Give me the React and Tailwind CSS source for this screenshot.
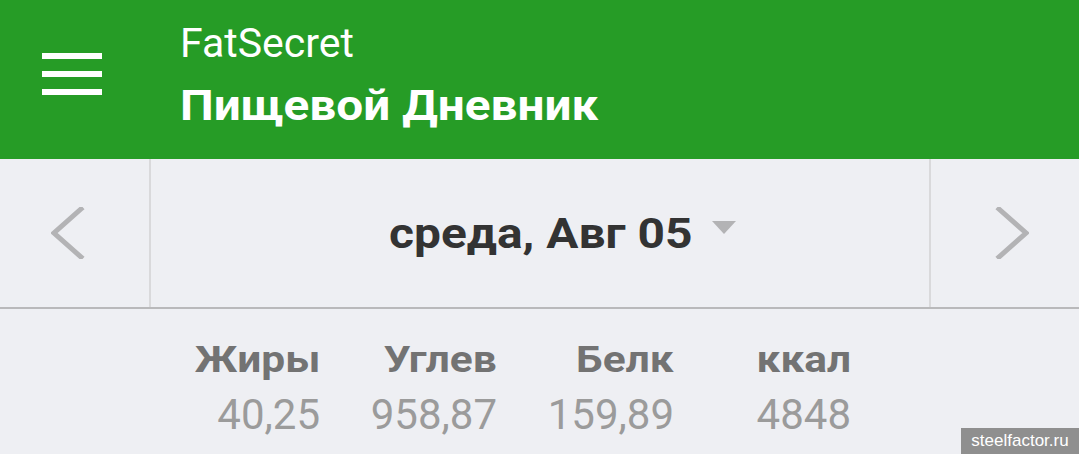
import React from 'react';

const stats = [
  { label: 'Жиры', value: '40,25' },
  { label: 'Углев', value: '958,87' },
  { label: 'Белк', value: '159,89' },
  { label: 'ккал', value: '4848' },
];

function Chevron({ dir }) {
  const d = dir === 'left' ? 'M30 2 L3 26 L30 50' : 'M4 2 L31 26 L4 50';
  return (
    <svg width="34" height="52" viewBox="0 0 34 52" fill="none">
      <path d={d} stroke="#b3b3b5" strokeWidth="5" strokeLinecap="square" strokeLinejoin="miter" />
    </svg>
  );
}

export default function App() {
  return (
    <div className="relative w-[1079px] h-[454px] overflow-hidden bg-[#eeeff3] font-['Roboto','Liberation_Sans',sans-serif]">
      {/* шапка */}
      <header className="h-[159px] bg-[#269c26] flex">
        <div className="w-[180px] pl-[42px] pt-[53px] flex flex-col gap-[12px]">
          <span className="block w-[60px] h-[6px] bg-white" />
          <span className="block w-[60px] h-[6px] bg-white" />
          <span className="block w-[60px] h-[6px] bg-white" />
        </div>
        <div className="flex flex-col items-start pt-[23px] text-white">
          <div className="text-[41px] leading-[40px] font-normal">FatSecret</div>
          <div className="mt-[22px] inline-block origin-left scale-x-[1.136] whitespace-nowrap text-[42px] leading-[42px] font-bold">
            Пищевой Дневник
          </div>
        </div>
      </header>

      {/* выбор даты */}
      <div className="h-[150px] flex border-b-[2px] border-[#b9b9bb]">
        <div className="w-[151px] flex items-center justify-center pr-[14px] border-r-[2px] border-[#d9d9db]">
          <Chevron dir="left" />
        </div>
        <div className="flex-1 flex items-center justify-center">
          <div className="relative w-[302px]">
            <span className="inline-block origin-left scale-x-[1.14] whitespace-nowrap text-[42px] font-bold text-[#333333]">
              среда, Авг 05
            </span>
            <span className="absolute left-[323px] top-[19px] w-0 h-0 border-l-[12px] border-r-[12px] border-t-[13px] border-l-transparent border-r-transparent border-t-[#b3b3b5]" />
          </div>
        </div>
        <div className="w-[150px] flex items-center justify-center pl-[14px] border-l-[2px] border-[#d9d9db]">
          <Chevron dir="right" />
        </div>
      </div>

      {/* итоги */}
      <div className="flex pl-[143px] pt-[29px]">
        {stats.map((s) => (
          <div key={s.label} className="w-[177px] flex flex-col items-end">
            <div className="inline-block origin-right scale-x-[1.18] whitespace-nowrap text-[36px] leading-[44px] font-bold text-[#737373]">
              {s.label}
            </div>
            <div className="mt-[9px] text-[42px] leading-[48px] font-normal text-[#9b9b9b]">{s.value}</div>
          </div>
        ))}
      </div>

      <div className="absolute right-0 bottom-0 w-[118px] h-[26px] bg-[#8f8f8f] flex items-center justify-center text-[17px] text-white font-['Liberation_Sans',sans-serif]">
        steelfactor.ru
      </div>
    </div>
  );
}
